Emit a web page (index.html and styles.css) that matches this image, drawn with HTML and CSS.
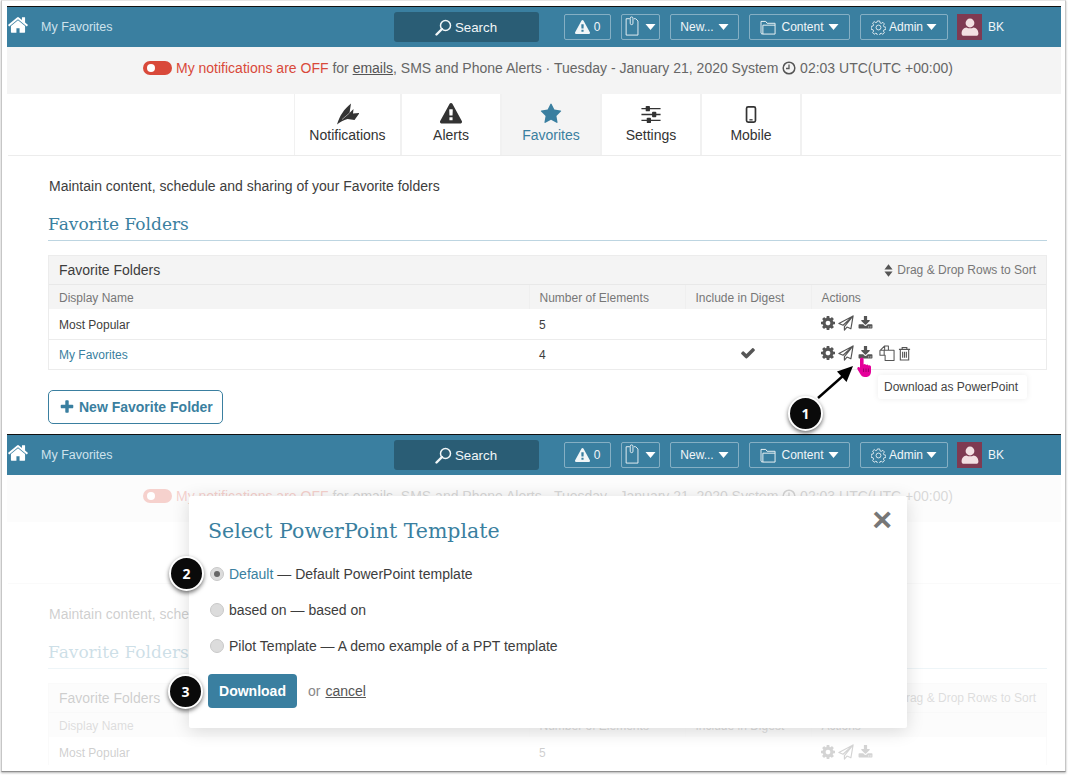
FILE: index.html
```html
<!DOCTYPE html>
<html lang="en">
<head>
<meta charset="utf-8">
<title>Select PowerPoint Template</title>
<link rel="stylesheet" href="styles.css">
</head>
<body>
<svg class="defs" aria-hidden="true">
  <symbol id="i-home" viewBox="0 0 1792 1792"><path d="M1472 992v480q0 26-19 45t-45 19h-384v-384h-256v384h-384q-26 0-45-19t-19-45v-480q0-1 .5-3t.5-3l575-474 575 474q1 2 1 6zm223-69l-62 74q-8 9-21 11h-3q-13 0-21-7l-692-577-692 577q-12 8-24 7-13-2-21-11l-62-74q-8-10-7-23.500t11-21.500l719-599q32-26 76-26t76 26l244 204v-195q0-14 9-23t23-9h192q14 0 23 9t9 23v408l219 182q10 8 11 21.500t-7 23.500z"/></symbol>
  <symbol id="i-star" viewBox="0 0 1792 1792"><path d="M1728 650q0 22-26 48l-363 354 86 500q1 7 1 20 0 21-10.500 35.500t-30.500 14.500q-19 0-40-12l-449-236-449 236q-22 12-40 12-21 0-31.500-14.500t-10.500-35.500q0-6 2-20l86-500-364-354q-25-27-25-48 0-37 56-46l502-73 225-455q19-41 49-41t49 41l225 455 502 73q56 9 56 46z"/></symbol>
  <symbol id="i-warn" viewBox="0 0 1792 1792"><path d="M1024 1375v-190q0-14-9.500-23.500t-22.500-9.500h-192q-13 0-22.500 9.500t-9.500 23.500v190q0 14 9.500 23.500t22.500 9.500h192q13 0 22.500-9.500t9.500-23.500zm-2-374l18-459q0-12-10-19-13-11-24-11h-220q-11 0-24 11-10 7-10 21l17 457q0 10 10 16.500t24 6.500h185q14 0 23.500-6.500t10.500-16.500zm-14-934l768 1408q35 63-2 126-17 29-46.500 46t-63.500 17h-1536q-34 0-63.500-17t-46.500-46q-37-63-2-126l768-1408q17-31 47-49t65-18 65 18 47 49z"/></symbol>
  <symbol id="i-cog" viewBox="128 128 1536 1536"><path d="M1152 896q0-106-75-181t-181-75-181 75-75 181 75 181 181 75 181-75 75-181zm512-109v222q0 12-8 23t-20 13l-185 28q-19 54-39 91 35 50 107 138 10 12 10 25t-9 23q-27 37-99 108t-94 71q-12 0-26-9l-138-108q-44 23-91 38-16 136-29 186-7 28-36 28h-222q-14 0-24.500-8.500t-11.500-21.500l-28-184q-49-16-90-37l-141 107q-10 9-25 9-14 0-25-11-126-114-165-168-7-10-7-23 0-12 8-23 15-21 51-66.500t54-70.500q-27-50-41-99l-183-27q-13-2-21-12.500t-8-23.500v-222q0-12 8-23t19-13l186-28q14-46 39-92-40-57-107-138-10-12-10-24 0-10 9-23 26-36 98.500-107.500t94.500-71.500q13 0 26 10l138 107q44-23 91-38 16-136 29-186 7-28 36-28h222q14 0 24.500 8.500t11.500 21.500l28 184q49 16 90 37l142-107q9-9 24-9 13 0 25 10 129 119 165 170 7 8 7 22 0 12-8 23-15 21-51 66.500t-54 70.500q26 50 41 98l183 28q13 2 21 12.500t8 23.500z"/></symbol>
  <symbol id="i-check" viewBox="0 0 1792 1792"><path d="M1671 566q0 40-28 68l-724 724-136 136q-28 28-68 28t-68-28l-136-136-362-362q-28-28-28-68t28-68l136-136q28-28 68-28t68 28l294 295 656-657q28-28 68-28t68 28l136 136q28 28 28 68z"/></symbol>
  <symbol id="i-plus" viewBox="0 0 1792 1792"><path d="M1600 736v192q0 40-28 68t-68 28h-416v416q0 40-28 68t-68 28h-192q-40 0-68-28t-28-68v-416h-416q-40 0-68-28t-28-68v-192q0-40 28-68t68-28h416v-416q0-40 28-68t68-28h192q40 0 68 28t28 68v416h416q40 0 68 28t28 68z"/></symbol>
  <symbol id="i-download" viewBox="0 100 1792 1536"><path d="M1344 1344q0-26-19-45t-45-19-45 19-19 45 19 45 45 19 45-19 19-45zm256 0q0-26-19-45t-45-19-45 19-19 45 19 45 45 19 45-19 19-45zm128-224v320q0 40-28 68t-68 28h-1472q-40 0-68-28t-28-68v-320q0-40 28-68t68-28h465l135 136q58 56 136 56t136-56l136-136h464q40 0 68 28t28 68zm-325-569q17 41-14 70l-448 448q-18 19-45 19t-45-19l-448-448q-31-29-14-70 17-39 59-39h256v-448q0-26 19-45t45-19h256q26 0 45 19t19 45v448h256q42 0 59 39z"/></symbol>
  <symbol id="i-plane" viewBox="0 0 18 18"><path d="M17 1 1 9.500l4.700 2L17 1 7.200 13v4l2.900-3.400 4.400 1.900z" fill="none" stroke="currentColor" stroke-width="1.300" stroke-linejoin="round"/></symbol>
  <symbol id="i-copy" viewBox="0 0 17 17"><path d="M6 1h4v4.500H5.500V11H1V6zM6 1v4.500H1.500M10 5.500h3l3 0v11H6.500V11h-1V5.500z" fill="none" stroke="currentColor" stroke-width="1.100" stroke-linejoin="round"/></symbol>
  <symbol id="i-trash" viewBox="0 0 14 16"><path d="M1 3.500h12M4.500 3.500V1.500h5v2M2.500 3.500V15h9V3.500M5 6v6.500M7 6v6.500M9 6v6.500" fill="none" stroke="currentColor" stroke-width="1.200"/></symbol>
  <symbol id="i-search" viewBox="0 0 17 17"><circle cx="10.500" cy="6.500" r="5" fill="none" stroke="currentColor" stroke-width="1.500"/><path d="M7 10 1.500 15.500" stroke="currentColor" stroke-width="2.400" stroke-linecap="round"/></symbol>
  <symbol id="i-caret" viewBox="0 0 10 6"><path d="M0 0h10L5 6z"/></symbol>
  <symbol id="i-clip" viewBox="0 0 16 22"><path d="M5 3H1v18h13V5.500L11.500 3H9.500" fill="none" stroke="currentColor" stroke-width="1"/><path d="M5.500 8V2.500a1.500 1.500 0 0 1 3 0V8a1.500 1.500 0 0 1-3 0" fill="none" stroke="currentColor" stroke-width="1"/></symbol>
  <symbol id="i-folder" viewBox="0 0 18 16"><path d="M1 14V1.500h5L7.500 3.500H16V15H3V5.500h13M1 14.500l2 .5" fill="none" stroke="currentColor" stroke-width="1"/></symbol>
  <symbol id="i-gear" viewBox="0 0 16 16"><path d="M6.800 1h2.400l.4 2 1.300.6 1.800-1.100 1.600 1.700-1.100 1.700.6 1.400 2 .4v2.400l-2 .4-.6 1.300 1.100 1.800-1.700 1.600-1.700-1.100-1.400.6-.4 2H6.800l-.4-2-1.300-.6-1.800 1.100-1.600-1.700 1.100-1.700-.6-1.400-2-.4V6.800l2-.4.6-1.300-1.100-1.800 1.700-1.600 1.700 1.100 1.400-.6z" fill="none" stroke="currentColor" stroke-width=".9"/><circle cx="8" cy="8" r="2.600" fill="none" stroke="currentColor" stroke-width=".9"/></symbol>
  <symbol id="i-user" viewBox="0 0 25 27"><circle cx="12.500" cy="8.500" r="5.500"/><path d="M2 21.500c0-4.500 3-7 6-7.500 2.500 1.600 6.500 1.600 9 0 3 .5 6 3 6 7.500 0 1.500-1 3-3 3H5c-2 0-3-1.500-3-3z"/></symbol>
  <symbol id="i-notif" viewBox="0 0 22 22"><path d="M0 21.500C2.500 13 7 6 14 .5L12.500 10 16.500 6 16 10.500 22.500 10 17.500 17 10.500 16C6.500 17 3 19 0 21.500z"/><path d="M5 16.500 12.500 10" fill="none" stroke="#fff" stroke-width=".5"/></symbol>
  <symbol id="i-sliders" viewBox="0 0 18 16"><path d="M0 2.500h18M0 8h18M0 13.500h18" stroke="currentColor" stroke-width="1.300"/><rect x="4" y="0" width="4" height="5" rx=".8"/><rect x="10" y="5.500" width="4" height="5" rx=".8"/><rect x="5" y="11" width="4" height="5" rx=".8"/></symbol>
  <symbol id="i-mobile" viewBox="0 0 10 16"><rect x=".8" y=".8" width="8.400" height="14.400" rx="1.500" fill="none" stroke="currentColor" stroke-width="1.600"/><path d="M3.500 13h3" stroke="currentColor" stroke-width="1.200"/></symbol>
  <symbol id="i-clock" viewBox="0 0 14 14"><circle cx="7" cy="7" r="5.800" fill="none" stroke="currentColor" stroke-width="1.500"/><path d="M7 3.500V7.500H4" fill="none" stroke="currentColor" stroke-width="1.300"/></symbol>
  <symbol id="i-sort" viewBox="0 0 10 14"><path d="M5 0l4.500 6H.5zM5 14 .5 8h9z"/></symbol>
  <symbol id="i-hand" viewBox="0 0 15 20"><path d="M3 2.200a1.800 1.800 0 0 1 3.600 0V7.500a1.900 1.900 0 0 1 2.500.4 1.800 1.800 0 0 1 2.400.6 1.700 1.700 0 0 1 2.500 1.300v4.700c0 3.300-2 5.500-5 5.500H8c-2.500 0-3.600-1-4.700-3L.6 12.500C-.5 10.500 1.700 9.200 3 10.700z" fill="#e5009a"/><path d="M6.600 11.500v3.500M9 11.500v3.500M11.400 11.500v3.500" stroke="#8a0060" stroke-width=".8"/></symbol>
</svg>

<main class="frame">
  <section class="shot shot-one">
    <header class="bar">
      <svg class="home"><use href="#i-home"/></svg>
      <span class="crumb">My Favorites</span>
      <div class="search"><svg class="ic-search"><use href="#i-search"/></svg>Search</div>
      <div class="btn btn-alert"><svg class="ic-warn"><use href="#i-warn"/></svg>0</div>
      <div class="btn btn-clip"><svg class="ic-clip"><use href="#i-clip"/></svg><svg class="caret"><use href="#i-caret"/></svg></div>
      <div class="btn btn-new">New...<svg class="caret"><use href="#i-caret"/></svg></div>
      <div class="btn btn-content"><svg class="ic-folder"><use href="#i-folder"/></svg>Content<svg class="caret"><use href="#i-caret"/></svg></div>
      <div class="btn btn-admin"><svg class="ic-gear"><use href="#i-gear"/></svg>Admin<svg class="caret"><use href="#i-caret"/></svg></div>
      <div class="avatar"><svg class="ic-user"><use href="#i-user"/></svg></div>
      <span class="initials">BK</span>
    </header>
    <div class="strip">
      <span class="toggle"><span class="knob"></span></span>
      <span><span class="off">My notifications are OFF</span> for <u>emails</u>, SMS and Phone Alerts · Tuesday - January 21, 2020 System <svg class="ic-clock"><use href="#i-clock"/></svg> 02:03 UTC(UTC +00:00)</span>
    </div>
    <nav class="tabs">
      <a class="tab tab-first"><svg class="tab-ic"><use href="#i-notif"/></svg>Notifications</a>
      <a class="tab"><svg class="tab-ic"><use href="#i-warn"/></svg>Alerts</a>
      <a class="tab tab-on"><svg class="tab-ic"><use href="#i-star"/></svg>Favorites</a>
      <a class="tab"><svg class="tab-ic ti-small"><use href="#i-sliders"/></svg>Settings</a>
      <a class="tab"><svg class="tab-ic ti-small"><use href="#i-mobile"/></svg>Mobile</a>
    </nav>
    <div class="content">
      <p class="intro">Maintain content, schedule and sharing of your Favorite folders</p>
      <h2 class="section-title">Favorite Folders</h2>
      <div class="panel">
        <div class="panel-head"><span class="panel-title">Favorite Folders</span><span class="sort"><svg class="ic-sort"><use href="#i-sort"/></svg>Drag &amp; Drop Rows to Sort</span></div>
        <table class="grid">
          <thead><tr><th class="c-name">Display Name</th><th class="c-num">Number of Elements</th><th class="c-dig">Include in Digest</th><th>Actions</th></tr></thead>
          <tbody>
            <tr><td>Most Popular</td><td>5</td><td></td><td><div class="acts"><svg class="a-cog"><use href="#i-cog"/></svg><svg class="a-plane"><use href="#i-plane"/></svg><svg class="a-dl"><use href="#i-download"/></svg></div></td></tr>
            <tr><td><a class="link">My Favorites</a></td><td>4</td><td class="center"><svg class="a-check"><use href="#i-check"/></svg></td><td><div class="acts"><svg class="a-cog"><use href="#i-cog"/></svg><svg class="a-plane"><use href="#i-plane"/></svg><svg class="a-dl"><use href="#i-download"/></svg><svg class="a-copy"><use href="#i-copy"/></svg><svg class="a-trash"><use href="#i-trash"/></svg></div></td></tr>
          </tbody>
        </table>
      </div>
      <a class="new-folder"><svg class="ic-plus"><use href="#i-plus"/></svg>New Favorite Folder</a>
    </div>
  </section>

  <section class="shot shot-two">
    <header class="bar">
      <svg class="home"><use href="#i-home"/></svg>
      <span class="crumb">My Favorites</span>
      <div class="search"><svg class="ic-search"><use href="#i-search"/></svg>Search</div>
      <div class="btn btn-alert"><svg class="ic-warn"><use href="#i-warn"/></svg>0</div>
      <div class="btn btn-clip"><svg class="ic-clip"><use href="#i-clip"/></svg><svg class="caret"><use href="#i-caret"/></svg></div>
      <div class="btn btn-new">New...<svg class="caret"><use href="#i-caret"/></svg></div>
      <div class="btn btn-content"><svg class="ic-folder"><use href="#i-folder"/></svg>Content<svg class="caret"><use href="#i-caret"/></svg></div>
      <div class="btn btn-admin"><svg class="ic-gear"><use href="#i-gear"/></svg>Admin<svg class="caret"><use href="#i-caret"/></svg></div>
      <div class="avatar"><svg class="ic-user"><use href="#i-user"/></svg></div>
      <span class="initials">BK</span>
    </header>
    <div class="strip">
      <span class="toggle"><span class="knob"></span></span>
      <span><span class="off">My notifications are OFF</span> for <u>emails</u>, SMS and Phone Alerts · Tuesday - January 21, 2020 System <svg class="ic-clock"><use href="#i-clock"/></svg> 02:03 UTC(UTC +00:00)</span>
    </div>
    <nav class="tabs">
      <a class="tab tab-first"><svg class="tab-ic"><use href="#i-notif"/></svg>Notifications</a>
      <a class="tab"><svg class="tab-ic"><use href="#i-warn"/></svg>Alerts</a>
      <a class="tab tab-on"><svg class="tab-ic"><use href="#i-star"/></svg>Favorites</a>
      <a class="tab"><svg class="tab-ic ti-small"><use href="#i-sliders"/></svg>Settings</a>
      <a class="tab"><svg class="tab-ic ti-small"><use href="#i-mobile"/></svg>Mobile</a>
    </nav>
    <div class="content">
      <p class="intro">Maintain content, schedule and sharing of your Favorite folders</p>
      <h2 class="section-title">Favorite Folders</h2>
      <div class="panel">
        <div class="panel-head"><span class="panel-title">Favorite Folders</span><span class="sort"><svg class="ic-sort"><use href="#i-sort"/></svg>Drag &amp; Drop Rows to Sort</span></div>
        <table class="grid">
          <thead><tr><th class="c-name">Display Name</th><th class="c-num">Number of Elements</th><th class="c-dig">Include in Digest</th><th>Actions</th></tr></thead>
          <tbody>
            <tr><td>Most Popular</td><td>5</td><td></td><td><div class="acts"><svg class="a-cog"><use href="#i-cog"/></svg><svg class="a-plane"><use href="#i-plane"/></svg><svg class="a-dl"><use href="#i-download"/></svg></div></td></tr>
          </tbody>
        </table>
      </div>
    </div>
    <div class="veil"></div>
    <div class="modal">
      <button class="close" aria-label="Close">×</button>
      <h3 class="modal-title">Select PowerPoint Template</h3>
      <div class="opts">
        <div class="opt"><span class="radio radio-on"></span><span><a class="link">Default</a> — Default PowerPoint template</span></div>
        <div class="opt"><span class="radio"></span><span>based on — based on</span></div>
        <div class="opt"><span class="radio"></span><span>Pilot Template — A demo example of a PPT template</span></div>
      </div>
      <div class="modal-foot"><a class="download">Download</a><span class="or">or</span><u class="cancel">cancel</u></div>
    </div>
  </section>

  <div class="tooltip">Download as PowerPoint</div>
  <svg class="hand"><use href="#i-hand"/></svg>
  <svg class="arrow" viewBox="0 0 40 36"><path d="M2 35 28 12" stroke="#000" stroke-width="2.400"/><path d="M37 3 30.500 19 21 8.500z"/></svg>
  <span class="marker m1">1</span>
  <span class="marker m2">2</span>
  <span class="marker m3">3</span>
</main>
</body>
</html>
```

FILE: styles.css
```css
* { box-sizing: border-box; }
html, body { margin: 0; padding: 0; }
body {
  width: 1068px;
  height: 775px;
  overflow: hidden;
  background: #fff;
  font-family: "Liberation Sans", Arial, sans-serif;
  font-size: 14px;
  color: #3d3d3d;
}
.defs { position: absolute; width: 0; height: 0; }
svg { display: block; fill: currentColor; flex: none; }

.frame {
  position: relative;
  margin-left: 1px;
  width: 1065px;
  height: 772px;
  padding: 5px 4px 6px 5px;
  border: 1px solid #c6c6c6;
  border-top-color: #e6e6e6;
  border-bottom-color: #8f8f8f;
  box-shadow: 0 1px 2px rgba(0,0,0,.3);
}
.shot { position: relative; overflow: hidden; background: #fff; border-top: 1px solid #111; }
.shot-one { height: 428px; }
.shot-two { height: 331px; }

/* top bar */
.bar {
  display: flex;
  align-items: center;
  height: 40px;
  background: #3a7fa0;
  color: #fff;
  font-size: 12px;
}
.home { width: 22px; height: 22px; margin: -5px 0 0 0; color: #fff; }
.crumb { margin-left: 12px; width: 353px; color: #cfe2ec; font-size: 12.5px; }
.search {
  display: flex;
  align-items: center;
  justify-content: center;
  gap: 3px;
  width: 145px;
  height: 30px;
  padding-right: 1px;
  background: #2a5d75;
  border-radius: 3px;
  color: #f1f6f8;
  font-size: 13.3px;
  margin-right: 25px;
}
.ic-search { width: 17px; height: 17px; }
.btn {
  display: flex;
  align-items: center;
  justify-content: center;
  height: 26px;
  margin-right: 10px;
  border: 1px solid rgba(255,255,255,.38);
  border-radius: 2px;
  color: #f1f6f8;
}
.btn-alert { width: 47px; gap: 4px; }
.btn-clip { width: 39px; gap: 5px; }
.btn-new { width: 69px; gap: 4px; }
.btn-content { width: 101px; gap: 4px; }
.btn-admin { width: 88px; gap: 3px; margin-right: 9px; }
.caret { width: 11px; height: 6px; color: #fff; }
.ic-warn { width: 15px; height: 15px; }
.ic-clip { width: 15px; height: 20px; margin-top: -3px; }
.ic-folder { width: 17px; height: 15px; }
.ic-gear { width: 15px; height: 15px; }
.avatar {
  display: flex;
  align-items: center;
  justify-content: center;
  width: 25px;
  height: 26px;
  background: #7f3a52;
  color: #f3dfe2;
}
.ic-user { width: 20px; height: 22px; }
.initials { margin-left: 6px; color: #f1f6f8; font-size: 12px; }

/* notification strip */
.strip {
  display: flex;
  align-items: center;
  justify-content: center;
  height: 47px;
  padding: 0 0 5px 28px;
  background: #f4f4f4;
  color: #666;
  font-size: 14px;
  white-space: nowrap;
}
.toggle {
  display: block;
  width: 29px;
  height: 14px;
  margin-right: 4px;
  padding: 3px 0 0 4px;
  background: #d9493a;
  border-radius: 7px;
}
.knob { display: block; width: 8px; height: 8px; background: #fff; border-radius: 50%; }
.off { color: #d9493a; }
.strip u { color: #555; }
.ic-clock { display: inline-block; width: 14px; height: 14px; color: #555; vertical-align: -2px; }

/* tabs */
.tabs {
  display: flex;
  height: 62px;
  margin-left: 1px;
  padding-left: 286px;
  background: #fff;
  border-bottom: 1px solid #ececec;
}
.tab {
  display: flex;
  flex-direction: column;
  align-items: center;
  width: 100px;
  padding-top: 9px;
  border-right: 2px solid #f1f1f1;
  color: #333;
  line-height: 16px;
}
.tab-first { width: 108px; border-left: 1px solid #f1f1f1; }
.tab-on { background: #f4f4f4; color: #3a7fa0; }
.tab-ic { width: 22px; height: 22px; margin-bottom: 2px; }
.ti-small { height: 17px; margin: 3px 0 4px; }

/* page */
.content { margin-left: 1px; padding: 20px 14px 0 40px; }
.intro { margin: 0 0 15px; padding-left: 1px; font-size: 14px; line-height: 20px; color: #3d3d3d; }
.section-title {
  margin: 0 0 14px;
  padding-bottom: 3px;
  border-bottom: 1px solid #bdd5e1;
  font-family: "DejaVu Serif", "Liberation Serif", serif;
  font-weight: 400;
  font-size: 17px;
  line-height: 26px;
  color: #3a7fa0;
}
.panel { border: 1px solid #ececec; }
.panel-head {
  display: flex;
  align-items: center;
  justify-content: space-between;
  height: 29px;
  padding: 0 10px;
  background: #f4f4f4;
  border-bottom: 1px solid #e8e8e8;
}
.panel-title { font-size: 14px; color: #3d3d3d; }
.sort { display: flex; align-items: center; gap: 4px; font-size: 12px; color: #777; }
.ic-sort { width: 9px; height: 13px; color: #555; }
.grid { width: 100%; border-collapse: collapse; table-layout: fixed; font-size: 12px; }
.grid th {
  height: 24px;
  padding: 1px 10px 0;
  background: #f4f4f4;
  border-left: 1px solid #efefef;
  color: #777;
  font-weight: 400;
  text-align: left;
}
.grid th.c-name { border-left: 0; width: 480px; }
.grid th.c-num { width: 156px; }
.grid th.c-dig { width: 126px; }
.grid td { height: 30px; padding: 1px 10px 0; border-top: 1px solid #ececec; color: #3d3d3d; }
.grid tbody tr:first-child td { border-top: 0; padding-top: 2px; }
.center { text-align: center; }
.link { color: #3a7fa0; }
.acts { display: flex; align-items: center; color: #555; padding-bottom: 3px; }
.a-cog { width: 14px; height: 14px; }
.a-plane { width: 16px; height: 16px; margin-left: 3px; }
.a-dl { width: 15px; height: 14px; margin-left: 4px; }
.a-copy { width: 16px; height: 16px; margin-left: 6px; }
.a-trash { width: 13px; height: 15px; margin-left: 3px; }
.a-check { width: 16px; height: 16px; color: #555; margin: -3px auto 0; }
.new-folder {
  display: inline-flex;
  align-items: center;
  gap: 4px;
  height: 34px;
  margin-top: 20px;
  padding: 0 9px 0 10px;
  border: 1px solid #3a7fa0;
  border-radius: 5px;
  color: #3a7fa0;
  font-size: 14px;
  font-weight: 700;
}
.ic-plus { width: 16px; height: 16px; }

/* overlays */
.veil { position: absolute; left: 0; right: 0; top: 40px; bottom: 0; background: rgba(255,255,255,.75); }
.modal {
  position: absolute;
  left: 182px;
  top: 61px;
  width: 718px;
  height: 232px;
  padding: 20px 19px;
  background: #fff;
  border-radius: 2px;
  box-shadow: 0 3px 18px rgba(0,0,0,.14);
}
.close {
  position: absolute;
  right: 15px;
  top: 6px;
  padding: 0;
  border: 0;
  background: none;
  color: #777;
  font-family: "Liberation Sans", sans-serif;
  font-size: 34px;
  font-weight: 700;
  line-height: 34px;
}
.modal-title {
  margin: 0;
  font-family: "DejaVu Serif", "Liberation Serif", serif;
  font-weight: 400;
  font-size: 20.5px;
  line-height: 30px;
  color: #3a7fa0;
}
.opts { display: flex; flex-direction: column; gap: 16px; margin-top: 18px; }
.opt { display: flex; align-items: center; gap: 5px; height: 20px; font-size: 14px; color: #3d3d3d; padding-left: 2px; }
.radio {
  display: flex;
  align-items: center;
  justify-content: center;
  width: 14px;
  height: 14px;
  background: #dcdcdc;
  border: 1px solid #c9c9c9;
  border-radius: 50%;
}
.radio-on::after { content: ""; width: 6px; height: 6px; background: #666; border-radius: 50%; }
.modal-foot { display: flex; align-items: center; margin-top: 18px; }
.download {
  display: flex;
  align-items: center;
  justify-content: center;
  width: 89px;
  height: 34px;
  background: #3a7fa0;
  border-radius: 4px;
  color: #fff;
  font-size: 14px;
  font-weight: 700;
}
.or { margin-left: 11px; color: #888; font-size: 14px; }
.cancel { margin-left: 5px; color: #555; font-size: 14px; }

.tooltip {
  position: absolute;
  left: 876px;
  top: 374px;
  width: 149px;
  height: 24px;
  padding-left: 6px;
  background: #fff;
  border-radius: 3px;
  box-shadow: 0 0 6px rgba(0,0,0,.08);
  font-size: 12px;
  line-height: 24px;
  color: #444;
}
.hand { position: absolute; left: 855px; top: 356px; width: 15px; height: 20px; }
.arrow { position: absolute; left: 814px; top: 362px; width: 40px; height: 36px; color: #000; }
.marker {
  position: absolute;
  display: flex;
  align-items: center;
  justify-content: center;
  width: 35px;
  height: 35px;
  background: #0a0a0a;
  border: 2px solid #fff;
  border-radius: 50%;
  box-shadow: 0 2px 4px rgba(0,0,0,.55);
  color: #fff;
  font-family: "Open Sans", "Liberation Sans", sans-serif;
  font-size: 14px;
  font-weight: 700;
}
.m1 { left: 786px; top: 395px; }
.m2 { left: 167px; top: 555px; }
.m3 { left: 166px; top: 673px; }
```
